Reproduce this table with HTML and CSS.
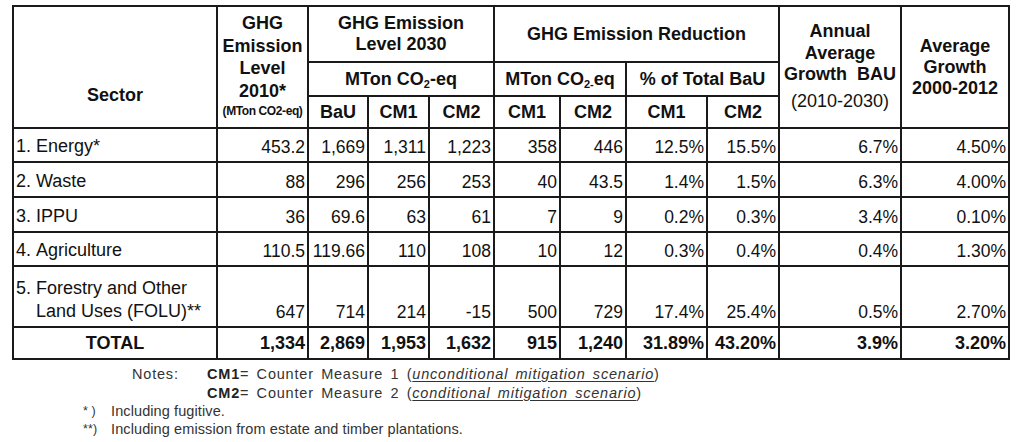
FILE: index.html
```html
<!DOCTYPE html>
<html lang="en">
<head>
<meta charset="utf-8">
<title>GHG Emission Table</title>
<link rel="stylesheet" href="styles.css">
</head>
<body>
<div class="page">
<table class="ghg">
  <colgroup>
    <col class="c-sector">
    <col class="c-2010">
    <col class="c-bau">
    <col class="c-cm1">
    <col class="c-cm2">
    <col class="c-rcm1">
    <col class="c-rcm2">
    <col class="c-pcm1">
    <col class="c-pcm2">
    <col class="c-annual">
    <col class="c-avg">
  </colgroup>
  <thead>
    <tr class="h1">
      <th rowspan="3" class="th-sector">Sector</th>
      <th rowspan="3" class="th-2010">GHG<br>Emission<br>Level<br>2010*<span class="unit">(MTon CO2-eq)</span></th>
      <th colspan="3">GHG Emission<br>Level 2030</th>
      <th colspan="4">GHG Emission Reduction</th>
      <th rowspan="3" class="th-annual">Annual<br>Average<br>Growth&nbsp; BAU<span class="period">(2010-2030)</span></th>
      <th rowspan="3" class="th-avg">Average<br>Growth<br>2000-2012</th>
    </tr>
    <tr class="h2">
      <th colspan="3">MTon CO<sub>2</sub>-eq</th>
      <th colspan="2">MTon CO<sub>2-</sub>eq</th>
      <th colspan="2">% of Total BaU</th>
    </tr>
    <tr class="h3">
      <th>BaU</th><th>CM1</th><th>CM2</th>
      <th>CM1</th><th>CM2</th>
      <th>CM1</th><th>CM2</th>
    </tr>
  </thead>
  <tbody>
    <tr class="r34">
      <td class="lbl"><div class="lab"><span class="no">1.</span><span>Energy*</span></div></td>
      <td>453.2</td><td>1,669</td><td>1,311</td><td>1,223</td>
      <td>358</td><td>446</td><td>12.5%</td><td>15.5%</td><td>6.7%</td><td>4.50%</td>
    </tr>
    <tr class="r35">
      <td class="lbl"><div class="lab"><span class="no">2.</span><span>Waste</span></div></td>
      <td>88</td><td>296</td><td>256</td><td>253</td>
      <td>40</td><td>43.5</td><td>1.4%</td><td>1.5%</td><td>6.3%</td><td>4.00%</td>
    </tr>
    <tr class="r35">
      <td class="lbl"><div class="lab"><span class="no">3.</span><span>IPPU</span></div></td>
      <td>36</td><td>69.6</td><td>63</td><td>61</td>
      <td>7</td><td>9</td><td>0.2%</td><td>0.3%</td><td>3.4%</td><td>0.10%</td>
    </tr>
    <tr class="r34">
      <td class="lbl"><div class="lab"><span class="no">4.</span><span>Agriculture</span></div></td>
      <td>110.5</td><td>119.66</td><td>110</td><td>108</td>
      <td>10</td><td>12</td><td>0.3%</td><td>0.4%</td><td>0.4%</td><td>1.30%</td>
    </tr>
    <tr class="r61">
      <td class="lbl"><div class="lab"><span class="no">5.</span><span>Forestry and Other<br>Land Uses (FOLU)**</span></div></td>
      <td>647</td><td>714</td><td>214</td><td>-15</td>
      <td>500</td><td>729</td><td>17.4%</td><td>25.4%</td><td>0.5%</td><td>2.70%</td>
    </tr>
    <tr class="r32 total">
      <td class="lbl-total">TOTAL</td>
      <td>1,334</td><td>2,869</td><td>1,953</td><td>1,632</td>
      <td>915</td><td>1,240</td><td>31.89%</td><td>43.20%</td><td>3.9%</td><td>3.20%</td>
    </tr>
  </tbody>
</table>

<div class="notes">
  <div class="defs">
    <span class="notes-label">Notes:</span>
    <span class="def"><b>CM1</b>= Counter Measure 1 (<em>unconditional mitigation scenario</em>)</span>
    <span></span>
    <span class="def"><b>CM2</b>= Counter Measure 2 (<em>conditional mitigation scenario</em>)</span>
  </div>
  <div class="foot">
    <span class="mark">* )</span><span>Including fugitive.</span>
    <span class="mark">**)</span><span>Including emission from estate and timber plantations.</span>
  </div>
</div>
</div>
</body>
</html>
```

FILE: styles.css
```css
* { box-sizing: border-box; }

html, body {
  margin: 0;
  padding: 0;
  background: #ffffff;
}

body {
  font-family: "Liberation Sans", Arial, sans-serif;
  color: #111111;
}

.page {
  padding: 5px 0 0 12px;
}

.ghg {
  border-collapse: collapse;
  table-layout: fixed;
  width: 996px;
  border: 2px solid #1a1a1a;
}

.c-sector { width: 204px; }
.c-2010   { width: 91px; }
.c-bau    { width: 60px; }
.c-cm1    { width: 61px; }
.c-cm2    { width: 65px; }
.c-rcm1   { width: 66px; }
.c-rcm2   { width: 66px; }
.c-pcm1   { width: 81px; }
.c-pcm2   { width: 72px; }
.c-annual { width: 122px; }
.c-avg    { width: 108px; }

.ghg th,
.ghg td {
  border: 2px solid #1a1a1a;
  padding: 0;
}

.ghg th {
  font-size: 18px;
  font-weight: bold;
  line-height: 21px;
  text-align: center;
  vertical-align: middle;
}

.ghg sub {
  font-size: 11px;
  line-height: 0;
  vertical-align: -3px;
}

.h1 { height: 56px; }
.h2 { height: 34px; }
.h3 { height: 32px; }

.th-sector {
  vertical-align: top !important;
  padding-top: 78px !important;
}

.th-2010 {
  vertical-align: top !important;
  padding-top: 5px !important;
  line-height: 22.5px !important;
}

.unit {
  display: block;
  font-size: 12px;
  line-height: 14px;
  margin-top: 2px;
  letter-spacing: -0.4px;
}

.th-annual {
  vertical-align: top !important;
  padding-top: 14px !important;
  line-height: 21.5px !important;
}

.period {
  display: block;
  font-weight: normal;
  margin-top: 5px;
}

.th-avg {
  line-height: 21px;
}

.ghg td {
  font-size: 17.5px;
  line-height: 22px;
  text-align: right;
  vertical-align: bottom;
  padding: 0 2px 3px 0;
  white-space: nowrap;
}

.r34 { height: 34px; }
.r35 { height: 35px; }
.r61 { height: 61px; }
.r32 { height: 32px; }

.ghg td.lbl {
  text-align: left;
  padding: 0 0 3px 2px;
  font-size: 18px;
  line-height: 23px;
}

.lab {
  display: flex;
}

.no {
  flex: 0 0 20px;
}

.total td {
  font-weight: bold;
  font-size: 18px;
  padding-bottom: 4px;
}

.ghg td.lbl-total {
  text-align: center;
  padding-left: 0;
  padding-right: 0;
}

.notes {
  font-size: 14.5px;
  color: #333333;
}

.defs {
  display: grid;
  grid-template-columns: 75px auto;
  justify-content: start;
  padding-left: 120px;
  margin-top: 5px;
  line-height: 19px;
  letter-spacing: 0.8px;
  word-spacing: 2.5px;
}

.defs b {
  color: #222222;
}

.defs em {
  text-decoration: underline;
  text-underline-offset: 2px;
}

.foot {
  display: grid;
  grid-template-columns: 28px auto;
  justify-content: start;
  padding-left: 71px;
  line-height: 18px;
  letter-spacing: 0.1px;
  margin-top: -1px;
}

.mark {
  font-size: 12.5px;
}
```
